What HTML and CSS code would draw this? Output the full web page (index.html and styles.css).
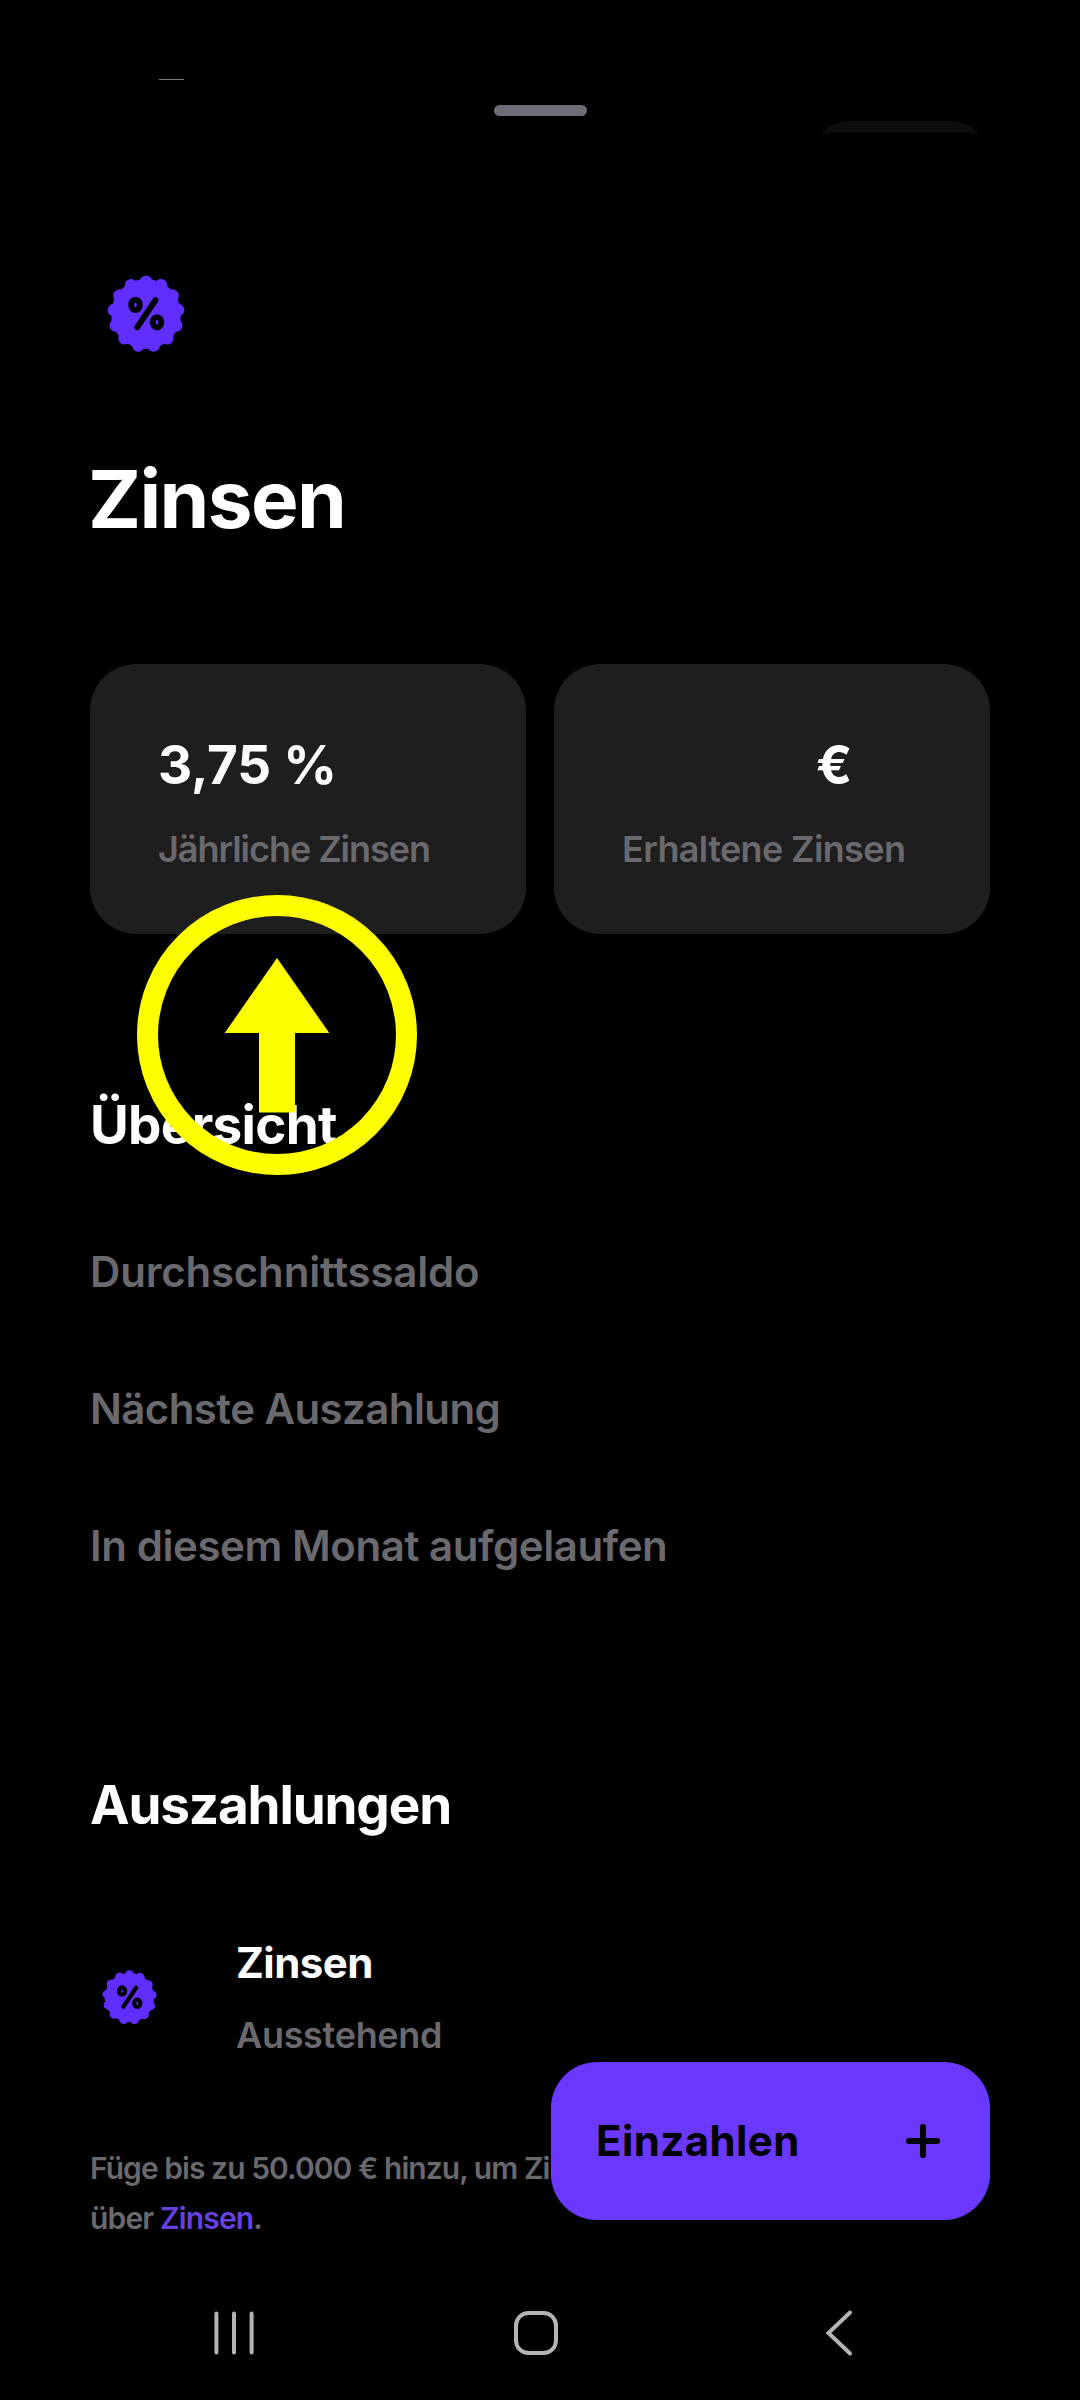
FILE: index.html
```html
<!DOCTYPE html>
<html lang="de">
<head>
<meta charset="utf-8">
<title>Zinsen</title>
<link rel="stylesheet" href="styles.css">
</head>
<body>
<svg class="defs" aria-hidden="true">
  <symbol id="percent-badge" viewBox="-56 -56 112 112">
    <circle r="34.9" fill="#602eff"/>
    <circle r="32.3" fill="none" stroke="#602eff" stroke-width="12.6" stroke-linecap="round" pathLength="13" stroke-dasharray="0.001 0.999" transform="rotate(-90)"/>
    <g fill="none" stroke="#000" stroke-width="5.9" stroke-linecap="round">
      <ellipse cx="-10.5" cy="-9.1" rx="4.3" ry="5.2"/>
      <ellipse cx="11" cy="8.3" rx="4.3" ry="5.2"/>
      <path d="M9.500-13.800L-8.700 13.200"/>
    </g>
  </symbol>
</svg>
<div class="screen">
  <header class="sheet-top">
    <span class="dash"></span>
    <span class="handle"></span>
    <span class="peek"><span class="peek-pill"></span></span>
  </header>
  <main class="content">
    <svg class="badge-large"><use href="#percent-badge"/></svg>
    <h1 class="title">Zinsen</h1>
    <section class="cards">
      <div class="card">
        <div class="value">3,75 %</div>
        <div class="label label-yearly">Jährliche Zinsen</div>
      </div>
      <div class="card">
        <div class="value value-currency">€</div>
        <div class="label label-earned">Erhaltene Zinsen</div>
      </div>
    </section>
    <h2 class="heading">Übersicht</h2>
    <ul class="rows">
      <li class="row row-balance">Durchschnittssaldo</li>
      <li class="row row-next">Nächste Auszahlung</li>
      <li class="row">In diesem Monat aufgelaufen</li>
    </ul>
    <h2 class="heading heading-payouts">Auszahlungen</h2>
    <div class="item">
      <svg class="badge-small"><use href="#percent-badge"/></svg>
      <div class="item-text">
        <div class="item-name">Zinsen</div>
        <div class="label item-state">Ausstehend</div>
      </div>
    </div>
    <p class="note"><span class="note-lead">Füge bis zu 50.000 € hinzu, um Zinsen</span><br>über <a class="link">Zinsen</a>.</p>
  </main>
  <nav class="navbar">
    <svg class="nav-icon" viewBox="-28 -28 56 56"><path d="M-17.6-19.5v39M0-19.5v39M17.6-19.5v39"/></svg>
    <svg class="nav-icon" viewBox="-28 -28 56 56"><rect x="-20" y="-20" width="40" height="40" rx="12.5"/></svg>
    <svg class="nav-icon" viewBox="-28 -28 56 56"><path d="M12-20.5-9.5 0 12 20.5"/></svg>
  </nav>
  <svg class="pointer" viewBox="0 0 280 280">
    <circle cx="140" cy="140" r="129.5" fill="none" stroke="#ff0" stroke-width="21"/>
    <path fill="#ff0" d="M140 63l52.300 75H158v79.500h-36V138H87.700Z"/>
  </svg>
  <button class="deposit">
    <span>Einzahlen</span>
    <svg class="plus" viewBox="0 0 34 34"><path d="M17 3v28M3 17h28"/></svg>
  </button>
</div>
</body>
</html>
```
FILE: styles.css
```css
* { box-sizing: border-box; }
body { margin: 0; background: #000; font-family: Inter, "Liberation Sans", sans-serif; }
.defs { position: absolute; width: 0; height: 0; }
.screen { position: relative; display: flex; flex-direction: column; width: 1080px; height: 2400px; background: #000; overflow: hidden; }

.sheet-top { display: flex; height: 133px; padding: 0 90px 0 159px; }
.dash { width: 25px; height: 1px; margin-top: 79px; background: #77777c; }
.handle { width: 93px; height: 11px; margin: 105px 0 0 310px; border-radius: 5.500px; background: #6c6d77; }
.peek { width: 180px; height: 12px; margin: 121px 0 0 auto; overflow: hidden; }
.peek-pill { display: block; height: 80px; border-radius: 40px; background: #0d0d0d; }

.content { padding: 125px 90px 0; }
.badge-large { display: block; width: 112px; height: 112px; }
.title { margin: 81px 0 0 -2px; font-size: 80px; line-height: 96px; font-weight: 700; letter-spacing: -1.600px; color: #fff; }
.cards { display: grid; grid-template-columns: 1fr 1fr; gap: 28px; margin-top: 117px; }
.card { height: 270px; padding: 69px 68px 0; border-radius: 46px; background: #1e1e1e; }
.value { font-size: 53px; line-height: 64px; font-weight: 700; letter-spacing: -.2px; color: #fff; }
.value-currency { padding-left: 194px; }
.label { margin-top: 30px; font-size: 36px; line-height: 44px; font-weight: 600; color: #69696e; white-space: nowrap; }
.label-yearly { letter-spacing: -1.050px; }
.label-earned { letter-spacing: -.63px; }
.heading { margin: 159px 0 0; font-size: 53px; line-height: 64px; font-weight: 700; letter-spacing: -.7px; color: #fff; }
.heading-payouts { letter-spacing: -1.150px; }
.rows { margin: 46px 0 0; padding: 0; list-style: none; }
.row { height: 137px; font-size: 42px; line-height: 137px; font-weight: 600; letter-spacing: -.42px; color: #69696e; }
.row-balance { letter-spacing: -.2px; }
.row-next { letter-spacing: -.58px; }
.item { display: flex; align-items: center; gap: 67px; margin-top: 101px; }
.badge-small { width: 79px; height: 79px; }
.item-name { font-size: 42px; line-height: 50px; font-weight: 700; letter-spacing: -.55px; color: #fff; }
.item-state { margin-top: 25px; letter-spacing: -.3px; }
.note { margin: 86px 0 0; font-size: 30px; line-height: 50px; font-weight: 600; letter-spacing: -.85px; color: #69696e; }
.note-lead { letter-spacing: -.95px; }
.link { color: #6640e2; }

.navbar { display: grid; grid-template-columns: repeat(3, 302px); justify-items: center; align-items: center; height: 134px; margin-top: auto; padding-left: 83px; }
.nav-icon { width: 56px; height: 56px; fill: none; stroke: #b4b4b4; stroke-width: 4; stroke-linecap: round; }

.pointer { position: absolute; left: 136.700px; top: 894.500px; width: 280px; height: 280px; }
.deposit { position: absolute; left: 551px; top: 2062px; width: 439px; height: 158px; display: flex; justify-content: space-between; align-items: center; padding: 0 50px 0 45px; border: 0; border-radius: 46px; background: #6b38ff; color: #000; font: 700 42px/50px Inter, "Liberation Sans", sans-serif; letter-spacing: .4px; }
.plus { width: 34px; height: 34px; fill: none; stroke: #000; stroke-width: 6; stroke-linecap: round; }
```
